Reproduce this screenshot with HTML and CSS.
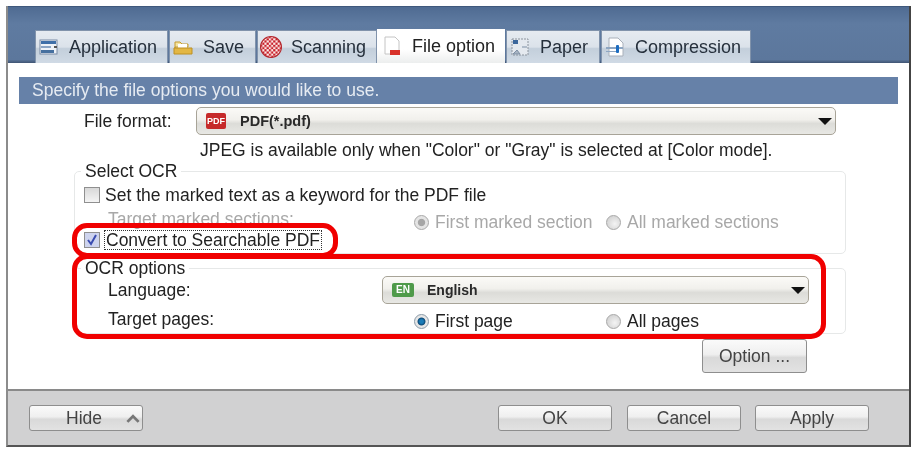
FILE: index.html
```html
<!DOCTYPE html>
<html lang="en">
<head>
  <meta charset="UTF-8">
  <meta name="viewport" content="width=device-width, initial-scale=1.0">
  <title>File option</title>
  <link rel="stylesheet" href="styles.css">
</head>
<body>

  <div class="window">
    <div class="tabbar">
      <div class="tab tab-app">
        <svg class="tab-icon" viewBox="0 0 20 20"><rect x="1" y="3" width="17" height="14" fill="#eef2f7" stroke="#7a8ca6"/><rect x="2" y="4" width="15" height="3" fill="#3f6fa8"/><rect x="2" y="9" width="10" height="2" fill="#8aa4c4"/><rect x="2" y="13" width="13" height="3" fill="#46709f"/><path d="M15 9h3v2h-3z" fill="#555"/></svg>
        Application
      </div>
      <div class="tab tab-save">
        <svg class="tab-icon" viewBox="0 0 20 20"><path d="M2 16V5h5l2 2h6v3H2z" fill="#f3e3a0" stroke="#c59b2e"/><rect x="5" y="7" width="9" height="5" fill="#fff"/><path d="M1 11h18v6H1z" fill="#e3b744" stroke="#bd9022"/></svg>
        Save
      </div>
      <div class="tab tab-scan">
        <svg class="tab-icon" viewBox="0 0 20 20"><defs><pattern id="checks" width="4" height="4" patternUnits="userSpaceOnUse"><rect width="4" height="4" fill="#fbe9e6"/><rect width="2" height="2" fill="#c8202a"/><rect x="2" y="2" width="2" height="2" fill="#c8202a"/></pattern></defs><circle cx="10" cy="10" r="9.5" fill="url(#checks)" stroke="#b3262c"/></svg>
        Scanning
      </div>
      <div class="tab tab-active">
        <svg class="tab-icon" viewBox="0 0 20 20"><path d="M3 1h10l4 4v10M3 1v17h6" fill="#fff" stroke="#c4c4c4"/><rect x="8" y="14" width="10" height="5" fill="#d8322a"/></svg>
        File option
      </div>
      <div class="tab tab-paper">
        <svg class="tab-icon" viewBox="0 0 20 20"><rect x="2" y="2" width="16" height="16" fill="#e4e9ef" stroke="#8c949e" stroke-dasharray="2 1"/><rect x="3" y="3" width="5" height="4" fill="#3b679c"/><path d="M12 10h5M3 17l4-4 3 4z" stroke="#7d8fa5" fill="#a8b4c2"/></svg>
        Paper
      </div>
      <div class="tab tab-comp">
        <svg class="tab-icon" viewBox="0 0 20 20"><path d="M4 1h9l5 5v13H4z" fill="#fff" stroke="#a9b0ba"/><rect x="1" y="10" width="17" height="2" fill="#8ea6c2"/><rect x="1" y="14" width="10" height="1" fill="#8ea6c2"/><rect x="11" y="8" width="3" height="8" rx="1" fill="#1c6cc0"/></svg>
        Compression
      </div>
    </div>

    <div class="panel">
      <div class="desc-bar">Specify the file options you would like to use.</div>

      <div class="format-row">
        <span class="format-label">File format:</span>
        <div class="select select-format">
          <span class="badge badge-pdf">PDF</span>
          <span class="select-text">PDF(*.pdf)</span>
          <span class="arrow"></span>
        </div>
      </div>
      <p class="note">JPEG is available only when "Color" or "Gray" is selected at [Color mode].</p>

      <fieldset class="group group-select">
        <legend>Select OCR</legend>
        <div class="check-row">
          <span class="check"></span>
          Set the marked text as a keyword for the PDF file
        </div>
        <div class="grid-row disabled row-marked">
          <span class="grid-label">Target marked sections:</span>
          <span class="radio-item radio-first"><span class="radio radio-off-on"></span>First marked section</span>
          <span class="radio-item"><span class="radio"></span>All marked sections</span>
        </div>
        <div class="check-row row-convert">
          <span class="check check-on">
            <svg viewBox="0 0 14 14"><path d="M3 7l3 4 5-9" fill="none" stroke="#3a4cb0" stroke-width="2"/></svg>
          </span>
          <span class="focus-text">Convert to Searchable PDF</span>
        </div>
      </fieldset>

      <fieldset class="group group-ocr">
        <legend>OCR options</legend>
        <div class="grid-row row-lang">
          <span class="grid-label">Language:</span>
          <div class="select select-lang">
            <span class="badge badge-en">EN</span>
            <span class="select-text">English</span>
            <span class="arrow"></span>
          </div>
        </div>
        <div class="grid-row row-pages">
          <span class="grid-label">Target pages:</span>
          <span class="radio-item radio-page"><span class="radio radio-on"></span>First page</span>
          <span class="radio-item"><span class="radio"></span>All pages</span>
        </div>
      </fieldset>

      <div class="option-row">
        <div class="btn btn-option">Option ...</div>
      </div>
    </div>

    <div class="footer">
      <div class="btn btn-hide">Hide <svg class="chevron" viewBox="0 0 12 8"><path d="M1 7l5-5 5 5" fill="none" stroke="#777" stroke-width="2.4"/></svg></div>
      <div class="footer-right">
        <div class="btn btn-ok">OK</div>
        <div class="btn">Cancel</div>
        <div class="btn">Apply</div>
      </div>
    </div>

    <div class="mark mark-convert"></div>
    <div class="mark mark-ocr"></div>
  </div>

</body>
</html>
```

FILE: styles.css
```css
* {
  margin: 0;
  padding: 0;
  box-sizing: border-box;
}

body {
  font-family: 'Liberation Sans', Arial, sans-serif;
  font-size: 17.5px;
  color: #222;
  background-color: #fff;
}

.window {
  position: relative;
  width: 905px;
  height: 441px;
  margin: 6px 0 0 6px;
  border-left: 2px solid #8c8c8c;
  border-right: 2px solid #444;
  border-bottom: 2px solid #555;
  display: flex;
  flex-direction: column;
  filter: blur(0.35px);
}

.tabbar {
  height: 57px;
  flex-shrink: 0;
  padding: 23px 0 0 27px;
  display: flex;
  gap: 1px;
  background: linear-gradient(#4f6b92, #5f7ba1 30%, #5c779c 94%, #3f5473);
  border-top: 1px solid #3f587c;
}

.tab {
  height: 33px;
  display: flex;
  align-items: center;
  gap: 10px;
  padding-left: 3px;
  font-size: 18px;
  color: #26303c;
  border: 1px solid #8193ab;
  border-bottom: none;
  background: linear-gradient(#e6ebf1, #dbe2ea 50%, #c3cfdb 55%, #d0dae5);
}

.tab-icon {
  width: 20px;
  height: 20px;
  flex-shrink: 0;
}

.tab-app { width: 133px; }
.tab-save { width: 87px; }
.tab-scan { width: 120px; }
.tab-paper { width: 94px; }
.tab-comp { width: 150px; }

.tab-scan .tab-icon {
  width: 22px;
  height: 22px;
  margin-left: -1px;
  margin-right: -1px;
}

.tab-active {
  width: 128px;
  margin: -1px 0 0 -1px;
  height: 34px;
  padding-left: 5px;
  color: #222;
  border: none;
  background: linear-gradient(#fff, #fff 60%, #eceeee);
}

.panel {
  flex: 1;
  padding: 14px 11px 0;
  background-color: #fff;
}

.desc-bar {
  height: 27px;
  line-height: 26px;
  padding-left: 13px;
  color: #e6ebf2;
  background-color: #6681a8;
}

.format-row {
  display: flex;
  align-items: center;
  margin-top: 3px;
}

.format-label {
  width: 177px;
  padding-left: 65px;
}

.select {
  height: 28px;
  display: flex;
  align-items: center;
  border: 1px solid #a8a498;
  border-radius: 5px;
  background: linear-gradient(#fbfaf7, #f1f0ec 45%, #dcdcd8 60%, #e8e8e4);
}

.select-format {
  width: 640px;
  padding-left: 9px;
}

.select-format .select-text {
  font-size: 14.5px;
  margin-left: 14px;
}

.select-text {
  font-size: 14px;
  font-weight: bold;
  color: #2a2a2a;
  margin-left: 13px;
}

.badge {
  width: 20px;
  height: 16px;
  font-size: 9px;
  font-weight: bold;
  line-height: 16px;
  text-align: center;
  color: #fff;
  border-radius: 2px;
}

.badge-pdf {
  background-color: #c62a2a;
}

.badge-en {
  width: 22px;
  height: 14px;
  line-height: 14px;
  font-size: 10px;
  background-color: #4f9a4a;
}

.arrow {
  width: 0;
  height: 0;
  margin-left: auto;
  margin-right: 3px;
  border-left: 7px solid transparent;
  border-right: 7px solid transparent;
  border-top: 7px solid #111;
}

.note {
  height: 24px;
  line-height: 24px;
  margin-top: 3px;
  padding-left: 181px;
  white-space: nowrap;
}

.group {
  display: block;
  width: 772px;
  margin-left: 55px;
  padding: 0 0 0 9px;
  border: 1px solid #e6e8e8;
  border-radius: 5px;
}

.group legend {
  margin-left: -3px;
  padding: 0 4px;
  line-height: 18px;
}

.group-select {
  height: 92px;
}

.group-ocr {
  height: 75px;
  margin-top: 5px;
}

.check-row {
  display: flex;
  align-items: center;
  height: 22px;
  margin-top: 4px;
  gap: 5px;
  white-space: nowrap;
}

.check {
  width: 16px;
  height: 16px;
  border: 1px solid #8f8f8f;
  background: linear-gradient(#d8d8d8, #f4f4f4);
}

.check-on {
  background: #ced4ee;
}

.check-on svg {
  display: block;
}

.row-convert {
  margin-top: -4px;
}

.focus-text {
  padding: 0 1px;
  line-height: 18px;
  outline: 1px dotted #333;
}

.grid-row {
  display: flex;
  align-items: center;
  height: 22px;
  white-space: nowrap;
}

.grid-label {
  width: 330px;
  padding-left: 24px;
}

.disabled {
  color: #a8a8a8;
}

.row-marked {
  margin-top: 5px;
}

.row-marked .grid-label {
  padding-bottom: 6px;
}

.radio-item {
  display: flex;
  align-items: center;
  gap: 6px;
}

.radio-first {
  width: 192px;
}

.radio-page {
  width: 192px;
}

.row-pages .radio-item {
  padding-top: 4px;
}

.radio {
  width: 15px;
  height: 15px;
  border: 1px solid #a8a8a8;
  border-radius: 50%;
  background: radial-gradient(circle at 60% 60%, #f4f4f4, #c8c8c8);
}

.radio-off-on {
  background: radial-gradient(circle, #a6a6a6 35%, #e4e4e4 45%);
}

.radio-on {
  border-color: #8a9aa8;
  background: radial-gradient(circle, #1a7cb8 20%, #0d4a78 38%, #e6e6e6 48%);
}

.row-lang {
  height: 28px;
  margin-top: -1px;
}

.row-lang .grid-label {
  width: 298px;
}

.select-lang {
  width: 427px;
  padding-left: 9px;
}

.row-pages {
  margin-top: 4px;
}

.option-row {
  display: flex;
  justify-content: flex-end;
  margin-top: 5px;
  padding-right: 91px;
}

.btn {
  width: 114px;
  height: 26px;
  display: flex;
  align-items: center;
  justify-content: center;
  color: #444;
  border: 1px solid #8e8e8e;
  border-radius: 3px;
  background: linear-gradient(#fafafa, #efefef 45%, #d9d9d9 55%, #e2e2e2);
}

.btn-option {
  width: 105px;
  height: 34px;
}

.btn-ok {
  margin-right: 1px;
}

.footer {
  height: 56px;
  flex-shrink: 0;
  display: flex;
  align-items: center;
  padding: 0 40px 0 21px;
  background-color: #d1d1d2;
  border-top: 2px solid #8a8a8a;
}

.btn-hide {
  justify-content: flex-start;
  gap: 24px;
  padding-left: 36px;
}

.chevron {
  width: 14px;
  height: 9px;
}

.footer-right {
  display: flex;
  gap: 14px;
  margin-left: auto;
}

.mark {
  position: absolute;
  border: 5px solid #f00000;
  border-radius: 15px;
}

.mark-convert {
  left: 64px;
  top: 217px;
  width: 266px;
  height: 35px;
}

.mark-ocr {
  left: 64px;
  top: 248px;
  width: 754px;
  height: 85px;
}
```
